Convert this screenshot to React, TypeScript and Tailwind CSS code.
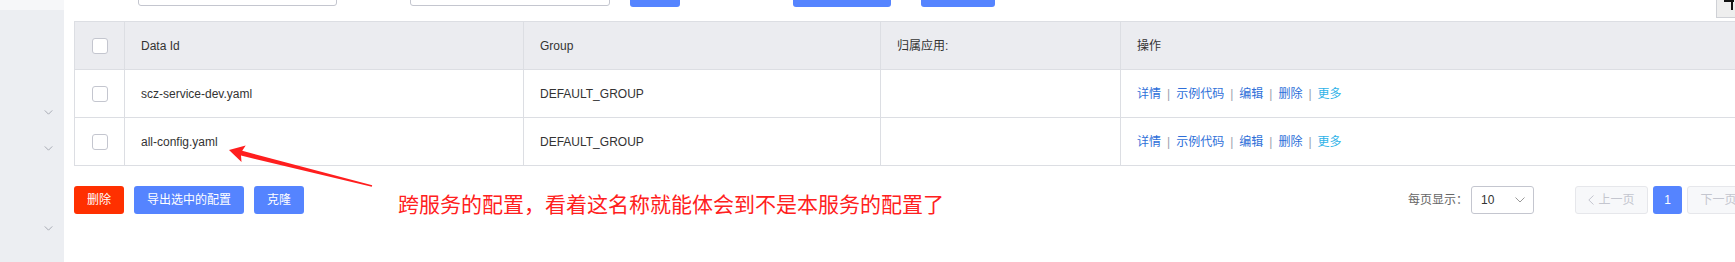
import React from 'react';

const FONT = { fontFamily: '"Liberation Sans", "Noto Sans CJK SC", sans-serif' };

function ChevronDown({ className }: { className?: string }) {
  return (
    <svg viewBox="0 0 10 6" className={className} fill="none" stroke="currentColor" strokeWidth="1">
      <polyline points="0.5,0.5 5,5 9.5,0.5" />
    </svg>
  );
}

function Checkbox() {
  return <div className="w-4 h-4 rounded-[3px] border border-[#c4c6cf] bg-white" />;
}

const rows = [
  { id: 'scz-service-dev.yaml', group: 'DEFAULT_GROUP' },
  { id: 'all-config.yaml', group: 'DEFAULT_GROUP' },
];

function Actions() {
  const sep = <span className="mx-[6px] text-[#9aa0ad]">|</span>;
  return (
    <div className="flex items-center text-[#2e6fd9]">
      <span>详情</span>
      {sep}
      <span>示例代码</span>
      {sep}
      <span>编辑</span>
      {sep}
      <span>删除</span>
      {sep}
      <span className="text-[#2fb3e8]">更多</span>
    </div>
  );
}

export default function App() {
  const cell = 'h-[48px] flex items-center border-b border-r border-[#dcdee3]';
  return (
    <div className="relative w-[1735px] h-[262px] overflow-hidden bg-white flex text-[12px] text-[#333]" style={FONT}>
      {/* Sidebar */}
      <aside className="w-[64px] shrink-0 bg-[#eceef2] flex flex-col">
        <div className="h-[10px] bg-[#f6f7f9]" />
        <div className="pl-[44px] text-[#9a9ea8]">
          <ChevronDown className="w-[9px] h-[5px] mt-[100px]" />
          <ChevronDown className="w-[9px] h-[5px] mt-[31px]" />
          <ChevronDown className="w-[9px] h-[5px] mt-[75px]" />
        </div>
      </aside>

      {/* Content */}
      <main className="flex-1 pl-[10px]">
        {/* search bar, scrolled mostly out of view */}
        <div className="flex items-end h-[7px]">
          <div className="ml-[64px] w-[199px] h-[28px] mb-[1px] border border-[#c4c6cf] rounded-[3px] bg-white" />
          <div className="ml-[73px] w-[200px] h-[28px] mb-[1px] border border-[#c4c6cf] rounded-[3px] bg-white" />
          <div className="ml-[20px] w-[50px] h-[28px] rounded-[3px] bg-[#5584ff]" />
          <div className="ml-[113px] w-[98px] h-[28px] rounded-[3px] bg-[#5584ff]" />
          <div className="ml-[30px] w-[74px] h-[28px] rounded-[3px] bg-[#5584ff]" />
        </div>

        {/* Table */}
        <div className="mt-[14px] w-[1686px] border-l border-t border-[#dcdee3] grid grid-cols-[50px_399px_357px_240px_640px]">
          <div className={`${cell} justify-center bg-[#ebecf0]`}>
            <Checkbox />
          </div>
          <div className={`${cell} pl-4 bg-[#ebecf0]`}>Data Id</div>
          <div className={`${cell} pl-4 bg-[#ebecf0]`}>Group</div>
          <div className={`${cell} pl-4 bg-[#ebecf0]`}>归属应用:</div>
          <div className={`${cell} pl-4 bg-[#ebecf0]`}>操作</div>
          {rows.map((r) => (
            <React.Fragment key={r.id}>
              <div className={`${cell} justify-center`}>
                <Checkbox />
              </div>
              <div className={`${cell} pl-4`}>{r.id}</div>
              <div className={`${cell} pl-4`}>{r.group}</div>
              <div className={`${cell} pl-4`} />
              <div className={`${cell} pl-4`}>
                <Actions />
              </div>
            </React.Fragment>
          ))}
        </div>

        {/* Footer */}
        <div className="mt-[20px] w-[1686px] flex items-center justify-between">
          <div className="flex gap-[10px] text-white">
            <button className="w-[50px] h-[28px] rounded-[3px] bg-[#ff3000]">删除</button>
            <button className="w-[110px] h-[28px] rounded-[3px] bg-[#5584ff]">导出选中的配置</button>
            <button className="w-[50px] h-[28px] rounded-[3px] bg-[#5584ff]">克隆</button>
          </div>
          <div className="flex items-center">
            <span className="text-[#666]">每页显示：</span>
            <div className="ml-[3px] w-[63px] h-[28px] border border-[#c4c6cf] rounded-[3px] flex items-center justify-between pl-[9px] pr-[8px]">
              <span className="text-[#333]">10</span>
              <ChevronDown className="w-[10px] h-[6px] text-[#999]" />
            </div>
            <button className="ml-[41px] w-[73px] h-[28px] border border-[#e6e7eb] bg-[#f7f8fa] rounded-[3px] flex items-center justify-center gap-[4px] text-[#c4c6cf]">
              <svg viewBox="0 0 6 10" className="w-[6px] h-[10px]" fill="none" stroke="currentColor" strokeWidth="1">
                <polyline points="5.5,0.5 0.8,5 5.5,9.5" />
              </svg>
              上一页
            </button>
            <button className="ml-[5px] w-[29px] h-[28px] rounded-[3px] bg-[#5584ff] text-white">1</button>
            <button className="ml-[5px] w-[73px] h-[28px] border border-[#e6e7eb] bg-[#f7f8fa] rounded-[3px] flex items-center justify-center gap-[4px] text-[#c4c6cf]">
              下一页
              <svg viewBox="0 0 6 10" className="w-[6px] h-[10px]" fill="none" stroke="currentColor" strokeWidth="1">
                <polyline points="0.5,0.5 5.2,5 0.5,9.5" />
              </svg>
            </button>
          </div>
        </div>
      </main>

      {/* floating button at the top right, mostly scrolled away */}
      <div className="absolute right-0 top-0 w-[19px] h-[18px] border-l border-b border-[#cfd1d6] bg-[#eeeeee]">
        <div className="absolute left-[7px] top-0 w-[10px] h-[2px] bg-[#111]" />
        <div className="absolute left-[14px] top-0 w-[2px] h-[10px] bg-[#111]" />
      </div>

      {/* annotation */}
      <svg className="absolute inset-0 w-full h-full pointer-events-none" viewBox="0 0 1735 262">
        <polygon
          points="229,150 245.7,145.5 242.2,150.8 372.2,185.3 371.8,186.7 241,155.6 241.5,161.9"
          fill="#ff1e1e"
        />
      </svg>
      <div
        className="absolute left-[398px] top-[193px] text-[21px] leading-[21px] text-[#ff2020] whitespace-nowrap"
        style={{ fontFamily: '"Noto Sans CJK SC", sans-serif' }}
      >
        跨服务的配置，看着这名称就能体会到不是本服务的配置了
      </div>
    </div>
  );
}
